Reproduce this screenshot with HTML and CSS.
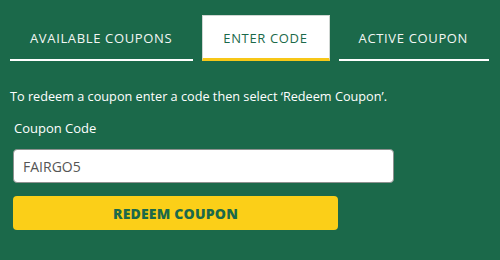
FILE: index.html
```html
<!DOCTYPE html>
<html>
<head>
<meta charset="utf-8">
<link rel="stylesheet" href="styles.css">
</head>
<body>
<div class="page">
  <nav class="tabs">
    <div class="tab">AVAILABLE COUPONS</div>
    <div class="tab active">ENTER CODE</div>
    <div class="tab">ACTIVE COUPON</div>
  </nav>
  <p class="intro">To redeem a coupon enter a code then select ‘Redeem Coupon’.</p>
  <label class="label" for="code">Coupon Code</label>
  <input class="input" id="code" type="text" value="FAIRGO5">
  <button class="btn">REDEEM COUPON</button>
</div>
</body>
</html>
```
FILE: styles.css
```css
html, body {
  margin: 0;
  padding: 0;
  background: #1b694a;
}
.page {
  width: 500px;
  height: 260px;
  box-sizing: border-box;
  padding: 15px 10px 0 10px;
  font-family: "Open Sans", sans-serif;
  color: #fff;
}
.tabs {
  display: flex;
  gap: 9px;
}
.tab {
  height: 46px;
  box-sizing: border-box;
  padding: 1px 21px 0 20px;
  display: flex;
  align-items: center;
  justify-content: center;
  white-space: nowrap;
  font-size: 13px;
  letter-spacing: 0.65px;
  color: #f3f6f4;
  border-bottom: 2px solid #fff;
}
.tab.active {
  background: #fff;
  color: #1b694a;
  border: 1px solid #cfd6d2;
  border-bottom: 3px solid #f7c718;
}
.intro {
  margin: 26px 0 0 0;
  font-size: 12.7px;
  line-height: 18px;
}
.label {
  display: block;
  margin: 14px 0 0 4px;
  font-size: 13px;
  line-height: 18px;
}
.input {
  display: block;
  margin: 12px 0 0 3px;
  width: 381px;
  height: 34px;
  box-sizing: border-box;
  border: 1px solid #8d918f;
  border-radius: 4px;
  padding: 0 9px;
  font-family: "Open Sans", sans-serif;
  font-size: 14px;
  color: #555;
  background: #fff;
}
.btn {
  display: block;
  margin: 13px 0 0 3px;
  width: 325px;
  height: 34px;
  border: none;
  border-radius: 4px;
  background: #fbcf18;
  color: #1b694a;
  font-family: "Open Sans", sans-serif;
  font-weight: 800;
  font-size: 14px;
  letter-spacing: 0.2px;
}
```
